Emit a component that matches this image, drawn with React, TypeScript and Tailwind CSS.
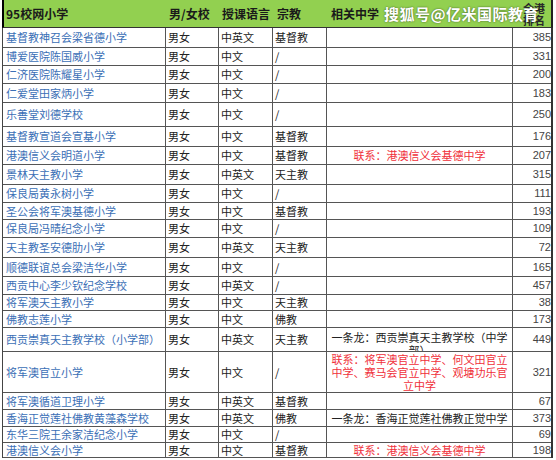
import React from "react";

type Row = {
  name: string;
  gender: string;
  lang: string;
  rel: string;
  mid?: string;
  midRed?: boolean;
  midTop?: boolean;
  rank: string;
  h: string;
};

const rows: Row[] = [
  { name: "基督教神召会梁省德小学", gender: "男女", lang: "中英文", rel: "基督教", rank: "385", h: "h-[20px]" },
  { name: "博爱医院陈国威小学", gender: "男女", lang: "中文", rel: "/", rank: "331", h: "h-[18px]" },
  { name: "仁济医院陈耀星小学", gender: "男女", lang: "中文", rel: "/", rank: "200", h: "h-[18px]" },
  { name: "仁爱堂田家炳小学", gender: "男女", lang: "中文", rel: "/", rank: "183", h: "h-[19px]" },
  { name: "乐善堂刘德学校", gender: "男女", lang: "中文", rel: "/", rank: "250", h: "h-[24px]" },
  { name: "基督教宣道会宣基小学", gender: "男女", lang: "中文", rel: "基督教", rank: "176", h: "h-[20px]" },
  { name: "港澳信义会明道小学", gender: "男女", lang: "中文", rel: "基督教", mid: "联系：港澳信义会基德中学", midRed: true, rank: "207", h: "h-[18px]" },
  { name: "景林天主教小学", gender: "男女", lang: "中英文", rel: "天主教", rank: "315", h: "h-[20px]" },
  { name: "保良局黄永树小学", gender: "男女", lang: "中文", rel: "/", rank: "111", h: "h-[18px]" },
  { name: "圣公会将军澳基德小学", gender: "男女", lang: "中文", rel: "基督教", rank: "193", h: "h-[17px]" },
  { name: "保良局冯晴纪念小学", gender: "男女", lang: "中文", rel: "/", rank: "109", h: "h-[18px]" },
  { name: "天主教圣安德肋小学", gender: "男女", lang: "中英文", rel: "天主教", rank: "72", h: "h-[20px]" },
  { name: "顺德联谊总会梁洁华小学", gender: "男女", lang: "中文", rel: "/", rank: "165", h: "h-[19px]" },
  { name: "西贡中心李少钦纪念学校", gender: "男女", lang: "中英文", rel: "/", rank: "457", h: "h-[18px]" },
  { name: "将军澳天主教小学", gender: "男女", lang: "中文", rel: "天主教", rank: "38", h: "h-[16px]" },
  { name: "佛教志莲小学", gender: "男女", lang: "中文", rel: "佛教", rank: "173", h: "h-[17px]" },
  { name: "西贡崇真天主教学校（小学部）", gender: "男女", lang: "中英文", rel: "天主教", mid: "一条龙：西贡崇真天主教学校（中学部）", midTop: true, rank: "449", h: "h-[24px]" },
  { name: "将军澳官立小学", gender: "男女", lang: "中文", rel: "/", mid: "联系：将军澳官立中学、何文田官立中学、赛马会官立中学、观塘功乐官立中学", midRed: true, rank: "321", h: "h-[41px]" },
  { name: "将军澳循道卫理小学", gender: "男女", lang: "中英文", rel: "基督教", rank: "67", h: "h-[17px]" },
  { name: "香海正觉莲社佛教黄藻森学校", gender: "男女", lang: "中英文", rel: "佛教", mid: "一条龙：香海正觉莲社佛教正觉中学", rank: "373", h: "h-[17px]" },
  { name: "东华三院王余家洁纪念小学", gender: "男女", lang: "中文", rel: "/", rank: "69", h: "h-[16px]" },
  { name: "港澳信义会小学", gender: "男女", lang: "中文", rel: "基督教", mid: "联系：港澳信义会基德中学", midRed: true, rank: "198", h: "h-[15px]" },
];

const cols = "grid grid-cols-[163px_53px_54px_54px_186px_40px]";
const font = "font-['Noto_Sans_CJK_SC','Noto_Sans',sans-serif]";

export default function App() {
  return (
    <div className={`w-[556px] h-[460px] bg-white overflow-hidden ${font}`}>
      <div className="relative pl-[2px] w-[553px]">
        {/* header */}
        <div className={`${cols} h-[28px] bg-[#92d050] border-l-2 border-l-black border-r-2 border-r-[#222] border-b border-b-[#333] text-[12px] font-bold text-[#1a1a1a] leading-none`}>
          <div className="flex items-center pl-[2px]">95校网小学</div>
          <div className="flex items-center pl-[2px]">男/女校</div>
          <div className="flex items-center pl-[2px]">授课语言</div>
          <div className="flex items-center pl-[3px]">宗教</div>
          <div className="flex items-center pl-[3px]">相关中学</div>
          <div className="flex flex-col justify-center items-center text-[11px] leading-[12px] text-[#2a2a2a]">
            <span>全港</span>
            <span>排名</span>
          </div>
        </div>
        <div className="absolute left-[384px] top-[4px] text-[15px] tracking-[0.5px] font-bold text-white leading-[20px] whitespace-nowrap [text-shadow:0_0_2px_rgba(0,0,0,0.6)]">
          搜狐号@亿米国际教育
        </div>
        {/* body */}
        <div className="border-l border-l-[#444] border-r-2 border-r-[#333]">
          {rows.map((r, i) => (
            <div key={i} className={`${cols} ${r.h} border-b border-b-[#555] text-[11px] leading-[13px]`}>
              <div className="flex items-center pl-[3px] border-r border-r-[#555] text-[#3b6fb6] whitespace-nowrap overflow-hidden">
                {r.name}
              </div>
              <div className="flex items-center pl-[2px] border-r border-r-[#555] text-[#222]">{r.gender}</div>
              <div className="flex items-center pl-[2px] border-r border-r-[#555] text-[#222]">{r.lang}</div>
              <div className="flex items-center pl-[2px] border-r border-r-[#555] text-[#222]">{r.rel}</div>
              <div
                className={`flex justify-center px-[3px] border-r border-r-[#555] overflow-hidden text-center ${
                  r.midTop ? "items-start pt-[3px]" : "items-center"
                } ${r.midRed ? "text-[#f0303a]" : "text-[#222]"}`}
              >
                {r.mid ? <span>{r.mid}</span> : null}
              </div>
              <div className="flex items-center justify-end pr-[2px] text-[#444] font-['Liberation_Sans',sans-serif]">
                {r.rank}
              </div>
            </div>
          ))}
        </div>
      </div>
    </div>
  );
}
